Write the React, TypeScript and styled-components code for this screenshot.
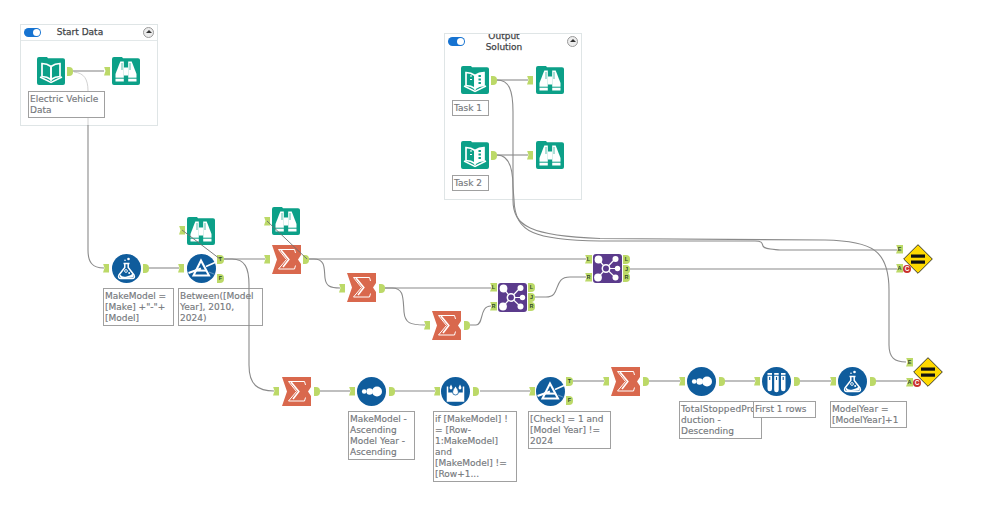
import React from "react";
import styled, { createGlobalStyle } from "styled-components";

const Global = createGlobalStyle`
  html, body { margin: 0; padding: 0; background: #fff; }
`;

const Canvas = styled.div`
  position: relative;
  width: 999px;
  height: 513px;
  overflow: hidden;
  background: #fff;
  font-family: "DejaVu Sans", Verdana, sans-serif;
`;

const Box = styled.section<{ $x: number; $y: number; $w: number; $h: number }>`
  position: absolute;
  left: ${(p) => p.$x}px;
  top: ${(p) => p.$y}px;
  width: ${(p) => p.$w}px;
  height: ${(p) => p.$h}px;
  box-sizing: border-box;
  border: 1px solid #dfe5e6;
  overflow: hidden;
  background: #fff;
`;

const BoxHeader = styled.header<{ $h: number; $rule: boolean }>`
  display: flex;
  align-items: center;
  gap: 4px;
  height: ${(p) => p.$h}px;
  padding: 0 3px;
  box-sizing: border-box;
  border-bottom: ${(p) => (p.$rule ? "1px solid #e3e8e9" : "none")};
`;

const Toggle = styled.span`
  position: relative;
  flex: none;
  width: 17px;
  height: 9px;
  border-radius: 5px;
  background: #1673d1;
  &::after {
    content: "";
    position: absolute;
    right: 1px;
    top: 1px;
    width: 7px;
    height: 7px;
    border-radius: 50%;
    background: #fff;
  }
`;

const BoxTitle = styled.h2`
  flex: 1;
  margin: 0;
  padding-right: 24px;
  font-size: 9px;
  font-weight: 400;
  line-height: 10.5px;
  text-align: center;
  color: #3f4447;
  -webkit-text-stroke: 0.25px #3f4447;
`;

const Collapse = styled.span`
  position: relative;
  flex: none;
  width: 11px;
  height: 11px;
  box-sizing: border-box;
  border-radius: 50%;
  border: 1px solid #9a9a9a;
  background: #ececec;
  &::after {
    content: "";
    position: absolute;
    left: 1.5px;
    top: 2px;
    border-left: 3px solid transparent;
    border-right: 3px solid transparent;
    border-bottom: 3px solid #333;
  }
`;

const Note = styled.div<{ $x: number; $y: number; $w: number; $h: number; $track?: number }>`
  position: absolute;
  left: ${(p) => p.$x}px;
  top: ${(p) => p.$y}px;
  width: ${(p) => p.$w}px;
  height: ${(p) => p.$h}px;
  box-sizing: border-box;
  padding: 2px 1px 0 1px;
  border: 1px solid #a0a0a0;
  background: #fff;
  color: #75787c;
  -webkit-text-stroke: 0.15px #75787c;
  font-size: 9px;
  line-height: 11px;
  white-space: pre;
  overflow: hidden;
  &::first-line {
    letter-spacing: ${(p) => p.$track ?? 0}px;
  }
`;

const WireLayer = styled.svg`
  position: absolute;
  inset: 0;
  width: 999px;
  height: 513px;
  fill: none;
  pointer-events: none;
`;

const Wire = styled.path<{ $tone?: "main" | "thin" | "faint" }>`
  stroke: ${(p) => (p.$tone === "thin" ? "#6f6f6f" : p.$tone === "faint" ? "#d2d2d2" : "#8a8a8a")};
  stroke-width: ${(p) => (p.$tone === "thin" ? 0.9 : p.$tone === "faint" ? 1 : 1.1)};
`;

const ToolSlot = styled.div<{ $x: number; $y: number; $s?: number }>`
  position: absolute;
  left: ${(p) => p.$x}px;
  top: ${(p) => p.$y}px;
  width: ${(p) => p.$s ?? 29}px;
  height: ${(p) => p.$s ?? 29}px;
  & > svg { display: block; width: 100%; height: 100%; }
`;

const AnchorIn = styled.span<{ $x: number; $y: number; $w?: number }>`
  position: absolute;
  left: ${(p) => p.$x}px;
  top: ${(p) => p.$y - 4.5}px;
  width: ${(p) => p.$w ?? 6}px;
  height: 9px;
  background: #bcd968;
  clip-path: polygon(0 0, 100% 0, 100% 100%, 0 100%, 25% 50%);
  color: #2f4a2a;
  font: 700 5.5px/9px "Liberation Sans", sans-serif;
  text-align: center;
`;

const AnchorOut = styled.span<{ $x: number; $y: number; $w?: number }>`
  position: absolute;
  left: ${(p) => p.$x}px;
  top: ${(p) => p.$y - 4.5}px;
  width: ${(p) => p.$w ?? 6}px;
  height: 9px;
  background: #bcd968;
  border-radius: 0 4px 4px 0;
  color: #2f4a2a;
  font: 700 5.5px/9px "Liberation Sans", sans-serif;
  text-align: center;
`;

const ErrorBadge = styled.span<{ $x: number; $y: number }>`
  position: absolute;
  left: ${(p) => p.$x - 4}px;
  top: ${(p) => p.$y - 4}px;
  width: 8px;
  height: 8px;
  border-radius: 50%;
  background: #c9302c;
  color: #fff;
  font: 700 6.5px/8px "Liberation Sans", sans-serif;
  text-align: center;
`;

const TEAL = "#0ca088";
const BLUE = "#0f5c9c";
const W = "#fff";

const FolderTile = ({ children }: { children: React.ReactNode }) => (
  <svg viewBox="0 0 28 28">
    <path d="M0 2 Q0 0 2 0 H10 L11 1.2 H26 Q28 1.2 28 3 V26 Q28 28 26 28 H2 Q0 28 0 26 Z" fill={TEAL} />
    {children}
  </svg>
);

const BookIcon = ({ dots }: { dots?: boolean }) => (
  <FolderTile>
    <path d="M14 9.5 Q10 6.5 5 6.5 V19.5 Q10 19.5 14 22.5 Z" fill="none" stroke={W} strokeWidth="1.7" />
    <path d="M14 9.5 Q18 6.5 23 6.5 V19.5 Q18 19.5 14 22.5 Z" fill={dots ? W : "none"} stroke={W} strokeWidth="1.7" />
    <path d="M3 20 L14 25.5 L25 20" fill="none" stroke={W} strokeWidth="1.4" />
    {dots && (
      <g fill={TEAL}>
        <rect x="17.5" y="9" width="2.4" height="2" />
        <rect x="17.5" y="12.5" width="2.4" height="2" />
        <rect x="17.5" y="16" width="2.4" height="2" />
      </g>
    )}
    {dots && <path d="M9 10 H11 M9 13.5 H11" stroke={W} strokeWidth="1.2" />}
  </FolderTile>
);

const BinocIcon = () => (
  <FolderTile>
    <g fill={W}>
      <path d="M8.3 4.5 H11.8 V24.5 H3.5 V17 Z" />
      <path d="M19.7 4.5 H16.2 V24.5 H24.5 V17 Z" />
      <rect x="11.8" y="10.5" width="4.4" height="8" />
    </g>
    <path d="M3 21.2 H12 M16 21.2 H25" stroke={TEAL} strokeWidth="1" />
    <path d="M10 6 V13" stroke={TEAL} strokeWidth="0.7" />
    <path d="M18 6 V13" stroke={TEAL} strokeWidth="0.7" />
  </FolderTile>
);

const Disc = ({ children }: { children: React.ReactNode }) => (
  <svg viewBox="0 0 29 29">
    <circle cx="14.5" cy="14.5" r="14.5" fill={BLUE} />
    {children}
  </svg>
);

const FormulaIcon = () => (
  <Disc>
    <path d="M11.5 9.5 H17.5 M12.8 9.5 V13.5 L7 21 Q5.5 24.5 9 24.5 H20 Q23.5 24.5 22 21 L16.2 13.5 V9.5" fill="none" stroke={W} strokeWidth="1.5" />
    <path d="M8 20.5 Q10.5 23.5 14.5 22.5 Q19 21.5 21 19.5 L21.5 23 Q20 24 9 24 Q7.5 23 8 20.5 Z" fill={W} />
    <circle cx="16.5" cy="5" r="1.3" fill={W} />
    <circle cx="13" cy="6.3" r="0.8" fill={W} />
    <circle cx="14" cy="17" r="1.4" fill="none" stroke={W} strokeWidth="0.9" />
    <circle cx="17.2" cy="19" r="1" fill={W} />
  </Disc>
);

const FilterIcon = () => (
  <Disc>
    <path d="M14 6.5 L6.5 21.5 H22 Z" fill="none" stroke={W} strokeWidth="2" />
    <path d="M1.5 19 L14 14.5" stroke={W} strokeWidth="2" />
    <path d="M8 16.6 H19" stroke={W} strokeWidth="2" />
    <path d="M19 12.5 L28 8.5" stroke={W} strokeWidth="1.5" />
    <path d="M22 18 L28 20.5" stroke="#5f93bf" strokeWidth="1.2" />
  </Disc>
);

const SortIcon = () => (
  <Disc>
    <circle cx="7.2" cy="14.5" r="2.3" fill={W} />
    <circle cx="12.6" cy="14.5" r="3.2" fill={W} />
    <circle cx="20" cy="14.5" r="5" fill={W} />
  </Disc>
);

const RowIcon = () => (
  <Disc>
    <path d="M6.5 9.5 V24 H22.5 V9.5" fill="none" stroke={W} strokeWidth="1.5" />
    <rect x="6.5" y="15.5" width="16" height="8.5" fill={W} />
    <path d="M14.5 9 Q11.5 13 11.5 15 A3 3 0 0 0 17.5 15 Q17.5 13 14.5 9 Z" fill={W} stroke={BLUE} strokeWidth="0.8" />
    <path d="M10 7.5 Q8.6 10 8.6 11 A1.4 1.4 0 0 0 11.4 11 Q11.4 10 10 7.5 Z" fill={W} />
    <path d="M19 7.5 Q17.6 10 17.6 11 A1.4 1.4 0 0 0 20.4 11 Q20.4 10 19 7.5 Z" fill={W} />
  </Disc>
);

const SampleIcon = () => (
  <Disc>
    <g fill={W}>
      <path d="M5.5 6 H10 V22 A2.25 2.25 0 0 1 5.5 22 Z" />
      <path d="M12.2 6 H16.7 V23 A2.25 2.25 0 0 1 12.2 23 Z" />
      <path d="M19 6 H23.5 V22 A2.25 2.25 0 0 1 19 22 Z" />
    </g>
    <path d="M4 8.3 H25" stroke={BLUE} strokeWidth="0.9" />
    <path d="M7.7 10 V13 M14.5 10 V13 M21.2 10 V13" stroke={BLUE} strokeWidth="1.1" />
  </Disc>
);

const SigmaIcon = () => (
  <svg viewBox="0 0 29 29">
    <path d="M0 0 H29 V10 L26 14.5 L29 19 V29 H0 L5 14.5 Z" fill="#d9684d" />
    <path d="M23.5 8 L22.5 4.5 H6.5 L14.5 14.5 L6.5 24 H22.5 L23.5 20.5" fill="none" stroke="#fff" strokeWidth="1" />
    <path d="M9 5 L16.8 14.5 L11 22" fill="none" stroke="#fff" strokeWidth="1.6" />
  </svg>
);

const JoinIcon = () => (
  <svg viewBox="0 0 29 29">
    <rect width="29" height="29" rx="3" fill="#5b3b8c" />
    <path d="M5 5 L13 14.5 L22 5 M13 14.5 H24 M5 23.5 L13 14.5 L22 23" stroke={W} strokeWidth="1.2" fill="none" />
    <circle cx="5.5" cy="5.5" r="3.9" fill={W} />
    <circle cx="22.5" cy="5" r="3" fill={W} />
    <circle cx="24.5" cy="14.5" r="2.7" fill={W} />
    <circle cx="22.5" cy="23.5" r="3" fill={W} />
    <circle cx="5" cy="23.5" r="3.9" fill={W} />
    <circle cx="13" cy="14.5" r="3.7" fill="#5b3b8c" stroke={W} strokeWidth="1.5" />
  </svg>
);

const DiffIcon = () => (
  <svg viewBox="0 0 30 30">
    <path d="M15 .7 L29.3 15 L15 29.3 L.7 15 Z" fill="#ffd900" stroke="#3a3a2a" strokeWidth="1" />
    <rect x="8" y="10.5" width="14" height="3.2" fill="#111" />
    <rect x="8" y="16.5" width="14" height="3.2" fill="#111" />
  </svg>
);

const icons: Record<string, React.ReactNode> = {
  book: <BookIcon />,
  task: <BookIcon dots />,
  binoc: <BinocIcon />,
  formula: <FormulaIcon />,
  filter: <FilterIcon />,
  sort: <SortIcon />,
  row: <RowIcon />,
  sample: <SampleIcon />,
  sigma: <SigmaIcon />,
  join: <JoinIcon />,
};

const tools: [string, number, number][] = [
  ["book", 37, 57], ["binoc", 112, 57],
  ["task", 461, 66], ["binoc", 536, 66], ["task", 461, 141], ["binoc", 536, 141],
  ["binoc", 187, 217], ["binoc", 272, 207],
  ["formula", 112, 254], ["filter", 187, 254], ["sigma", 272, 245],
  ["sigma", 347, 273], ["sigma", 432, 311], ["join", 498, 283], ["join", 593, 254],
  ["sigma", 282, 377], ["sort", 357, 377], ["row", 441, 377], ["filter", 536, 377],
  ["sigma", 611, 367], ["sort", 687, 367], ["sample", 762, 367], ["formula", 838, 367],
];

const inputs: [number, number, string?][] = [
  [104, 71], [527, 80], [527, 155], [179, 230], [264, 221],
  [103, 268], [178, 268], [264, 259], [339, 288], [424, 325],
  [490, 287, "L"], [490, 306, "R"], [585, 259, "L"], [585, 277, "R"],
  [273, 391], [349, 391], [434, 391], [529, 391], [603, 381],
  [679, 381], [754, 381], [830, 381],
  [896, 249, "E"], [896, 268, "A"], [906, 362, "E"], [906, 382, "A"],
];

const outputs: [number, number, string?][] = [
  [67, 71], [491, 80], [491, 155], [143, 268], [217, 259, "T"], [217, 278, "F"],
  [303, 259], [379, 288], [464, 325],
  [528, 287, "L"], [528, 297, "J"], [528, 306, "R"],
  [623, 259, "L"], [623, 269, "J"], [623, 277, "R"],
  [314, 391], [389, 391], [473, 391], [566, 381, "T"], [566, 400, "F"],
  [643, 381], [719, 381], [794, 381], [870, 381],
];

const notes: [number, number, number, number, string, number?][] = [
  [28, 91, 77, 27, "Electric Vehicle\nData"],
  [452, 100, 37, 16, "Task 1"],
  [452, 175, 37, 16, "Task 2"],
  [103, 288, 71, 38, 'MakeModel =\n[Make] +"-"+\n[Model]'],
  [178, 288, 85, 38, "Between([Model\nYear], 2010,\n2024)"],
  [348, 411, 67, 49, "MakeModel -\nAscending\nModel Year -\nAscending"],
  [433, 411, 84, 71, "if [MakeModel] !\n= [Row-\n1:MakeModel]\nand\n[MakeModel] !=\n[Row+1..."],
  [528, 411, 83, 38, "[Check] = 1 and\n[Model Year] !=\n2024"],
  [679, 401, 83, 38, "TotalStoppedPro\nduction -\nDescending", 0.15],
  [753, 401, 63, 17, "First 1 rows"],
  [830, 401, 77, 27, "ModelYear =\n[ModelYear]+1"],
];

const wires: string[] = [
  "M73 71 H104", "M88 125 V250 C88 262 92 268 104 268",
  "M497 80 H528", "M497 155 H528",
  "M497 80 C509 80 513 90 513 112 L513 200 C513 226 530 236 600 238.5 L825 240 C872 241 889 250 889 290 L889 345 C889 358 895 362 906 362",
  "M497 155 C508 155 513 165 513 187 L514 200 C515 233 535 240 600 241 L755 241 C762 241 762 243 763 246 C764 249 770 249 780 250 L897 250",
  "M149 268 H179", "M224 259 H265",
  "M224 259 H232 C245 259 249 268 249 285 V365 C249 385 258 391 274 391",
  "M309 259 H586",
  "M309 259 H314 C326 259 324 270 325 278 C326 286 330 288 340 288",
  "M385 288 H491",
  "M385 288 H392 C404 288 403 298 404 312 C405 323 410 325 425 325",
  "M470 325 H476 C484 325 479 306 491 306",
  "M535 297 H546 C562 297 552 277 570 277 H586",
  "M630 269 H897",
  "M320 391 H350", "M394 391 H435", "M480 391 H530", "M573 381 H604",
  "M649 381 H680", "M724 381 H755", "M799 381 H831", "M875 381 H907",
];

export default function App() {
  return (
    <Canvas>
      <Global />
      <Box $x={20} $y={24} $w={138} $h={102}>
        <BoxHeader $h={16} $rule>
          <Toggle />
          <BoxTitle>Start Data</BoxTitle>
          <Collapse />
        </BoxHeader>
      </Box>
      <Box $x={444} $y={33} $w={138} $h={167}>
        <BoxHeader $h={15} $rule={false}>
          <Toggle />
          <BoxTitle>
            Output
            <br />
            Solution
          </BoxTitle>
          <Collapse />
        </BoxHeader>
      </Box>

      <WireLayer viewBox="0 0 999 513">
        <Wire $tone="faint" d="M74 72 C84 73 88 79 88 91" />
        <Wire $tone="faint" d="M88 118 V125" />
      </WireLayer>

      {notes.map(([x, y, w, h, text, track]) => (
        <Note key={text} $x={x} $y={y} $w={w} $h={h} $track={track}>
          {text}
        </Note>
      ))}

      <WireLayer viewBox="0 0 999 513">
        {wires.map((d) => (
          <Wire key={d} d={d} />
        ))}
      </WireLayer>

      {tools.map(([kind, x, y]) => (
        <ToolSlot key={`${kind}${x}${y}`} $x={x} $y={y} $s={kind === "book" || kind === "task" || kind === "binoc" ? 28 : 29}>
          {icons[kind]}
        </ToolSlot>
      ))}

      {inputs.map(([x, y, l]) => (
        <AnchorIn key={`${x}-${y}`} $x={x} $y={y} $w={l ? 7 : 6}>
          {l}
        </AnchorIn>
      ))}
      {outputs.map(([x, y, l]) => (
        <AnchorOut key={`${x}-${y}`} $x={x} $y={y} $w={l ? 7 : 6}>
          {l}
        </AnchorOut>
      ))}

      <WireLayer viewBox="0 0 999 513">
        <Wire $tone="thin" d="M182 230 L220 259" />
        <Wire $tone="thin" d="M267 221 L307 259" />
      </WireLayer>

      <ToolSlot $x={903} $y={244} $s={30}>
        <DiffIcon />
      </ToolSlot>
      <ToolSlot $x={913} $y={357} $s={30}>
        <DiffIcon />
      </ToolSlot>
      <ErrorBadge $x={907} $y={269}>C</ErrorBadge>
      <ErrorBadge $x={917} $y={383}>C</ErrorBadge>
    </Canvas>
  );
}
